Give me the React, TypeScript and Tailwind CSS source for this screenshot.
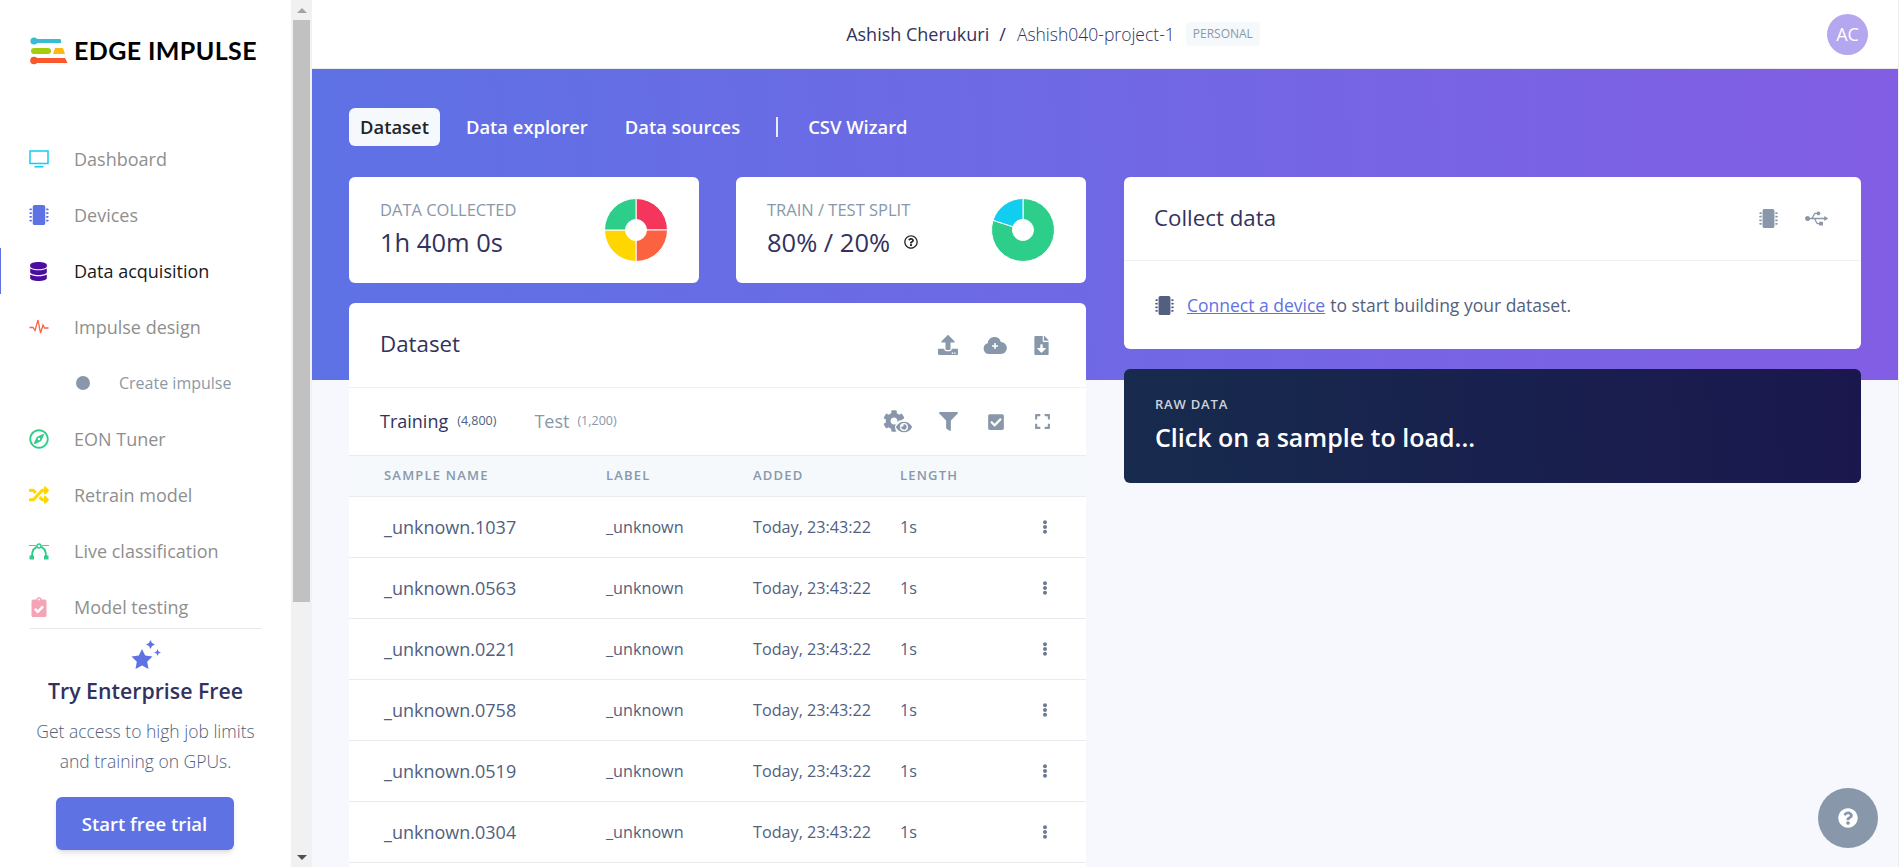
import {
  FaMicrochip,
  FaDatabase,
  FaRegCompass,
  FaRandom,
  FaClipboardCheck,
  FaUpload,
  FaFileDownload,
  FaCog,
  FaEye,
  FaFilter,
  FaCheckSquare,
  FaExpand,
  FaEllipsisV,
  FaUsb,
  FaRegQuestionCircle,
  FaQuestionCircle,
} from 'react-icons/fa';
import type { ReactNode } from 'react';

function TvIcon() {
  return (
    <svg width="20" height="18" viewBox="0 0 20 18" fill="none" stroke="#11cdef" strokeWidth="1.5">
      <rect x="1" y="1" width="18" height="12.5" />
      <path d="M5.5 16.8h9" />
    </svg>
  );
}

function PulseIcon() {
  return (
    <svg width="20" height="16" viewBox="0 0 20 16" fill="none" stroke="#fb6340" strokeWidth="1.3">
      <path d="M0.5 8.5h3.5l2 3 3-10.5 2.5 13 2.5-8 1.5 3h4" />
    </svg>
  );
}

function CurveIcon() {
  return (
    <svg width="20" height="17" viewBox="0 0 20 17" fill="none" stroke="#2dce89" strokeWidth="1.4">
      <path d="M3 13C3 7 6 4 10 3.5 14 4 17 7 17 13" strokeWidth="1.8" />
      <path d="M0 2.5h7M13 2.5h7" strokeWidth="0.9" />
      <circle cx="10" cy="3" r="2" fill="#fff" />
      <rect x="0.5" y="12.5" width="4.5" height="4" fill="#2dce89" stroke="none" />
      <rect x="15" y="12.5" width="4.5" height="4" fill="#2dce89" stroke="none" />
    </svg>
  );
}

function LogoIcon() {
  return (
    <svg width="39" height="28" viewBox="0 0 39 28" className="shrink-0">
      <circle cx="4" cy="4" r="3.6" fill="#37bcd4" />
      <path d="M4 2h26.5l1 4H4z" fill="#37bcd4" />
      <rect x="1" y="11" width="20" height="6" rx="3" fill="#a5cd0c" />
      <path d="M25 11h8l2 6H23z" fill="#fdb913" />
      <circle cx="4" cy="23.5" r="3.8" fill="#f9572c" />
      <path d="M4 21h31l2.5 5H4z" fill="#f9572c" />
    </svg>
  );
}

function StarIcon() {
  return (
    <svg width="32" height="31" viewBox="0 0 32 31" fill="#5e72e4">
      <path d="M12 9l3.2 6.6 7.3 1-5.3 5.1 1.3 7.3-6.5-3.5L5.500 29l1.300-7.300L1.500 16.600l7.300-1z" />
      <path d="M20.500 0l1.500 3 3 1.500-3 1.500-1.500 3-1.500-3-3-1.500 3-1.500z" />
      <path d="M27.500 9l1 2.500 2.500 1-2.500 1-1 2.500-1-2.500-2.500-1 2.500-1z" />
    </svg>
  );
}

function CloudPlusIcon() {
  return (
    <svg width="24" height="17" viewBox="0 0 24 17">
      <path
        d="M6 17a5.500 5.500 0 0 1-1.300-10.800A6.500 6.500 0 0 1 11.500 0a6.500 6.500 0 0 1 6.300 5A6 6 0 0 1 18 17z"
        fill="#8898aa"
      />
      <path d="M12 6v6M9 9h6" stroke="#fff" strokeWidth="1.500" />
    </svg>
  );
}

function GearEyeIcon() {
  return (
    <span className="relative block w-[29px] h-[24px] text-[#8898aa]">
      <FaCog size={22} />
      <span className="absolute right-0 bottom-0 flex items-center justify-center w-[17px] h-[14px] bg-white rounded-full">
        <FaEye size={16} />
      </span>
    </span>
  );
}

function polar(r: number, deg: number) {
  const a = ((deg - 90) * Math.PI) / 180;
  return [32 + r * Math.cos(a), 32 + r * Math.sin(a)];
}

function slice(from: number, to: number) {
  const [x1, y1] = polar(31.5, from);
  const [x2, y2] = polar(31.5, to);
  const [x3, y3] = polar(10.500, to);
  const [x4, y4] = polar(10.500, from);
  const large = to - from > 180 ? 1 : 0;
  return `M${x1} ${y1}A31.500 31.500 0 ${large} 1 ${x2} ${y2}L${x3} ${y3}A10.500 10.500 0 ${large} 0 ${x4} ${y4}Z`;
}

function Donut({ parts }: { parts: { from: number; to: number; color: string }[] }) {
  return (
    <svg width="64" height="64" viewBox="0 0 64 64" className="shrink-0">
      {parts.map((p) => (
        <path key={p.from} d={slice(p.from, p.to)} fill={p.color} stroke="#fff" strokeWidth="1" />
      ))}
    </svg>
  );
}

const navItems: { label: string; icon: ReactNode; active?: boolean; sub?: boolean }[] = [
  { label: 'Dashboard', icon: <TvIcon /> },
  { label: 'Devices', icon: <FaMicrochip size={20} className="text-[#5e72e4]" /> },
  { label: 'Data acquisition', icon: <FaDatabase size={19} className="text-[#4b0d9f]" />, active: true },
  { label: 'Impulse design', icon: <PulseIcon /> },
  { label: 'Create impulse', icon: null, sub: true },
  { label: 'EON Tuner', icon: <FaRegCompass size={20} className="text-[#2dce89]" /> },
  { label: 'Retrain model', icon: <FaRandom size={20} className="text-[#ffd600]" /> },
  { label: 'Live classification', icon: <CurveIcon /> },
  { label: 'Model testing', icon: <FaClipboardCheck size={20} className="text-[#f5a3b7]" /> },
];

const samples = ['1037', '0563', '0221', '0758', '0519', '0304'];

function Sidebar() {
  return (
    <aside className="w-[291px] shrink-0 h-full flex flex-col bg-white">
      <div className="h-[131px] shrink-0 pl-[30px] pt-[37px]">
        <div className="flex items-start gap-[5px]">
          <LogoIcon />
          <span className="-mt-[2px] font-['Lato',sans-serif] font-bold text-[25px] leading-[30px] tracking-[0.4px] text-black">
            EDGE IMPULSE
          </span>
        </div>
      </div>

      <nav className="flex-1 min-h-0 overflow-hidden">
        {navItems.map((item) =>
          item.sub ? (
            <div key={item.label} className="h-14 flex items-center pl-[76px]">
              <span className="w-[14px] h-[14px] rounded-full bg-[#8898aa]" />
              <span className="ml-[29px] text-[16px] text-[#8d98a5]">{item.label}</span>
            </div>
          ) : (
            <div key={item.label} className="h-14 flex items-center">
              <div className={`w-[1px] h-[46px] ${item.active ? 'bg-[#5e72e4]' : ''}`} />
              <div className="w-[73px] pl-[28px] flex items-center">{item.icon}</div>
              <span className={`text-[18px] ${item.active ? 'text-[#1a1a1a]' : 'text-[#8f8f8f]'}`}>{item.label}</span>
            </div>
          ),
        )}
      </nav>

      <div className="h-[239px] shrink-0 flex flex-col items-center">
        <div className="w-[232px] border-t border-[#e6e8ec]" />
        <div className="mt-[11px]">
          <StarIcon />
        </div>
        <div className="mt-[5px] text-[21.300px] leading-[30px] font-semibold text-[#32325d]">Try Enterprise Free</div>
        <p className="mt-[10px] text-[17.500px] leading-[30px] font-light text-center text-[#525f7f]">
          Get access to high job limits
          <br />
          and training on GPUs.
        </p>
        <button className="mt-[21px] mr-[2px] w-[178px] h-[53px] rounded-md bg-[#5e72e4] text-white font-semibold text-[18.500px] shadow-md">
          Start free trial
        </button>
      </div>
    </aside>
  );
}

function FakeScrollbar() {
  return (
    <div className="w-[21px] shrink-0 h-full bg-[#f1f1f1] flex flex-col items-center">
      <div className="h-[20px] shrink-0 flex items-center justify-center">
        <div className="w-0 h-0 border-x-[5px] border-x-transparent border-b-[5px] border-b-[#a3a3a3]" />
      </div>
      <div className="w-[17px] h-[582px] shrink-0 bg-[#c1c1c1]" />
      <div className="flex-1" />
      <div className="h-[20px] shrink-0 flex items-center justify-center">
        <div className="w-0 h-0 border-x-[5px] border-x-transparent border-t-[5px] border-t-[#505050]" />
      </div>
    </div>
  );
}

function TopBar() {
  return (
    <header className="h-[69px] shrink-0 bg-white border-b border-[#e9ecef] flex items-center pr-[30px]">
      <div className="flex-1 flex items-center justify-center pr-[33px]">
        <span className="text-[18px] font-medium text-[#32325d]">Ashish Cherukuri</span>
        <span className="ml-[10px] text-[18px] text-[#32325d]">/</span>
        <span className="ml-[11px] text-[17.500px] font-light text-[#32325d]">Ashish040-project-1</span>
        <span className="ml-[11px] h-[24px] px-[7px] flex items-center rounded bg-[#f6f9fc] text-[12px] font-medium text-[#8898aa]">
          PERSONAL
        </span>
      </div>
      <div className="w-[41px] h-[41px] rounded-full bg-[#b5a6f0] flex items-center justify-center text-white text-[18px]">
        AC
      </div>
    </header>
  );
}

function StatCard({ title, value, extra, chart }: { title: string; value: string; extra?: ReactNode; chart: ReactNode }) {
  return (
    <div className="h-[106px] bg-white rounded-md flex items-center justify-between pl-[31px] pr-[31px]">
      <div className="-mt-[3px]">
        <div className="text-[16.500px] leading-[22px] text-[#8898aa]">{title}</div>
        <div className="mt-[5px] flex items-center text-[25.500px] leading-[32px] text-[#32325d]">
          {value}
          {extra}
        </div>
      </div>
      {chart}
    </div>
  );
}

function DatasetCard() {
  return (
    <div className="mt-5 bg-white rounded-t-md">
      <div className="h-[85px] flex items-center justify-between pl-[31px] pr-[35px] border-b border-[#eef0f3]">
        <span className="pb-[2px] text-[22.300px] font-medium text-[#32325d]">Dataset</span>
        <div className="flex items-center gap-[25px] text-[#8898aa]">
          <FaUpload size={20} />
          <CloudPlusIcon />
          <FaFileDownload size={19} />
        </div>
      </div>
      <div className="h-[68px] flex items-center pl-[31px] pr-[35px] border-b border-[#e9ecef]">
        <span className="text-[18px] font-medium text-[#32325d]">Training</span>
        <span className="ml-[9px] text-[12.500px] text-[#525f7f]">(4,800)</span>
        <span className="ml-[38px] text-[18px] text-[#8898aa]">Test</span>
        <span className="ml-[8px] text-[12.500px] text-[#8898aa]">(1,200)</span>
        <div className="flex-1" />
        <div className="flex items-center gap-[30px] text-[#8898aa]">
          <span className="-mr-[3px]">
            <GearEyeIcon />
          </span>
          <FaFilter size={19} />
          <span className="-ml-[1px] -mr-[1px]">
            <FaCheckSquare size={18} />
          </span>
          <FaExpand size={17} />
        </div>
      </div>
      <div className="h-[41px] flex items-center pl-[35px] bg-[#f6f9fc] border-b border-[#e9ecef] text-[13px] font-semibold tracking-[1.2px] text-[#8898aa]">
        <span className="w-[222px]">SAMPLE NAME</span>
        <span className="w-[147px]">LABEL</span>
        <span className="w-[147px]">ADDED</span>
        <span>LENGTH</span>
      </div>
      {samples.map((s) => (
        <div key={s} className="h-[61px] flex items-center pl-[35px] border-b border-[#e9ecef] text-[#525f7f]">
          <span className="w-[222px] text-[18px] font-medium">_unknown.{s}</span>
          <span className="w-[147px] text-[16.200px]">_unknown</span>
          <span className="w-[147px] text-[16.200px]">Today, 23:43:22</span>
          <span className="w-[16px] text-[16.200px]">1s</span>
          <FaEllipsisV size={14} className="ml-[122px] text-[#6b7a90]" />
        </div>
      ))}
      <div className="h-[61px]" />
    </div>
  );
}

function RightColumn() {
  return (
    <div>
      <div className="bg-white rounded-md">
        <div className="h-[84px] flex items-center justify-between pl-[30px] pr-[33px] border-b border-[#eef0f3]">
          <span className="pb-[2px] text-[22.300px] font-medium text-[#32325d]">Collect data</span>
          <div className="flex items-center gap-[27px] text-[#8898aa]">
            <FaMicrochip size={19} />
            <FaUsb size={23} />
          </div>
        </div>
        <div className="h-[88px] flex items-center pl-[31px] text-[17.500px] text-[#525f7f]">
          <FaMicrochip size={19} className="text-[#525f7f]" />
          <a className="ml-[13px] text-[#5e72e4] underline">Connect a device</a>
          <span className="ml-[5px]">to start building your dataset.</span>
        </div>
      </div>
      <div className="mt-5 h-[114px] rounded-md bg-[linear-gradient(87deg,#172b4d,#1a174d)] pl-[31px] pt-[25px]">
        <div className="text-[13px] leading-[20px] font-semibold tracking-[0.8px] text-[#ced4da]">RAW DATA</div>
        <div className="mt-[5px] text-[25px] leading-[36px] font-semibold text-white">Click on a sample to load...</div>
      </div>
    </div>
  );
}

export default function App() {
  return (
    <div className="relative h-screen w-screen overflow-hidden flex bg-white font-['Open_Sans',sans-serif]">
      <Sidebar />
      <FakeScrollbar />
      <main className="flex-1 min-w-0 h-full flex flex-col">
        <TopBar />
        <div className="flex-1 min-h-0 overflow-hidden pl-[37px] pr-[37px] pt-[39px] bg-[#f7f8fe] bg-no-repeat bg-[size:100%_311px] bg-[image:linear-gradient(87deg,#5e72e4,#825ee4)]">
          <div className="flex items-center h-[38px] text-[18.400px] font-semibold text-white">
            <span className="h-[38px] px-[11px] flex items-center rounded-md bg-[#f6f9fc] text-[#212529]">Dataset</span>
            <span className="ml-[15px] px-[11px]">Data explorer</span>
            <span className="ml-[15px] px-[11px]">Data sources</span>
            <span className="ml-[25px] w-[2px] h-[20px] bg-[#e8ebfb]" />
            <span className="ml-[30px]">CSV Wizard</span>
          </div>
          <div className="mt-[31px] grid grid-cols-2 gap-x-[38px]">
            <div>
              <div className="grid grid-cols-2 gap-x-[37px]">
                <StatCard
                  title="DATA COLLECTED"
                  value="1h 40m 0s"
                  chart={
                    <Donut
                      parts={[
                        { from: 0, to: 90, color: '#f5365c' },
                        { from: 90, to: 180, color: '#fb6340' },
                        { from: 180, to: 270, color: '#ffd600' },
                        { from: 270, to: 360, color: '#2dce89' },
                      ]}
                    />
                  }
                />
                <StatCard
                  title="TRAIN / TEST SPLIT"
                  value="80% / 20%"
                  extra={<FaRegQuestionCircle size={14} className="ml-[14px] text-[#212529]" />}
                  chart={
                    <Donut
                      parts={[
                        { from: 0, to: 288, color: '#2dce89' },
                        { from: 288, to: 360, color: '#11cdef' },
                      ]}
                    />
                  }
                />
              </div>
              <DatasetCard />
            </div>
            <RightColumn />
          </div>
        </div>
      </main>
      <div className="w-[1px] shrink-0 h-full bg-[#eeeeee]" />
      <div className="absolute right-[21px] bottom-[19px] w-[60px] h-[60px] rounded-full bg-[#8898aa] flex items-center justify-center text-white">
        <FaQuestionCircle size={20} />
      </div>
    </div>
  );
}
